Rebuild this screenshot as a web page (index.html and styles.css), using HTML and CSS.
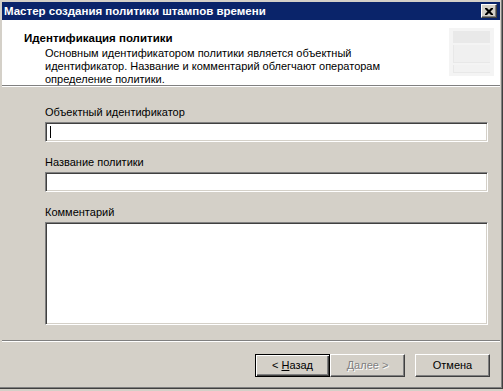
FILE: index.html
```html
<!DOCTYPE html>
<html lang="ru">
<head>
    <meta charset="UTF-8">
    <meta name="viewport" content="width=device-width, initial-scale=1.0">
    <title>Мастер создания политики штампов времени</title>
    <link rel="stylesheet" href="styles.css">
</head>
<body>
    <div class="window">
        <div class="titlebar">
            <span class="title">Мастер создания политики штампов времени</span>
            <div class="close-btn">
                <svg width="8" height="7" viewBox="0 0 8 7">
                    <path d="M0 0h2l2 2l2-2h2v1l-2.5 2.5l2.5 2.5v1h-2l-2-2l-2 2h-2v-1l2.5-2.5l-2.5-2.5z" fill="#000"/>
                </svg>
            </div>
        </div>

        <div class="header">
            <div class="header-text">
                <div class="header-title">Идентификация политики</div>
                <div class="header-desc">
                    Основным идентификатором политики является объектный<br>
                    идентификатор. Название и комментарий облегчают операторам<br>
                    определение политики.
                </div>
            </div>
            <div class="header-icon">
                <div class="icon-top"></div>
                <div class="icon-row"></div>
                <div class="icon-row small"></div>
            </div>
        </div>

        <div class="content">
            <div class="form-group">
                <label>Объектный идентификатор</label>
                <div class="field"><span class="caret"></span></div>
            </div>
            <div class="form-group">
                <label>Название политики</label>
                <div class="field"></div>
            </div>
            <div class="form-group">
                <label>Комментарий</label>
                <div class="field memo"></div>
            </div>
        </div>

        <div class="footer">
            <div class="btn default"><span class="btn-face">&lt; <u>Н</u>азад</span></div>
            <div class="btn disabled"><span class="btn-face"><u>Д</u>алее &gt;</span></div>
            <div class="btn cancel"><span class="btn-face">Отмена</span></div>
        </div>
    </div>
</body>
</html>
```

FILE: styles.css
```css
* {
    box-sizing: border-box;
    margin: 0;
    padding: 0;
}

body {
    font-family: "Liberation Sans", Arial, sans-serif;
    font-size: 11px;
    line-height: 13px;
    color: #000;
    background-color: #d4d0c8;
    width: 503px;
    height: 391px;
    overflow: hidden;
}

.window {
    width: 503px;
    padding: 2px 2px 2px 2px;
    background-color: #d4d0c8;
    border-right: 1px solid #404040;
    border-bottom: 1px solid #404040;
    box-shadow: inset -1px -1px 0 #808080;
    display: flex;
    flex-direction: column;
}

/* title bar */
.titlebar {
    height: 18px;
    background-color: #0a246a;
    display: flex;
    align-items: center;
    justify-content: space-between;
    padding: 0 3px 0 2px;
}

.title {
    color: #fff;
    font-weight: bold;
    font-size: 11.5px;
}

.close-btn {
    width: 16px;
    height: 14px;
    background-color: #d4d0c8;
    border-top: 1px solid #fff;
    border-left: 1px solid #fff;
    border-right: 1px solid #404040;
    border-bottom: 1px solid #404040;
    box-shadow: inset -1px -1px 0 #808080;
    display: flex;
    align-items: center;
    justify-content: center;
    padding-right: 1px;
}

/* header */
.header {
    height: 66px;
    background-color: #fff;
    border-bottom: 1px solid #808080;
    box-shadow: 0 1px 0 #fff;
    display: flex;
    justify-content: space-between;
    align-items: flex-start;
    padding: 12px 6px 0 22px;
    position: relative;
    z-index: 1;
}

.header-title {
    font-weight: bold;
    font-size: 11.5px;
    margin-bottom: 2px;
}

.header-desc {
    padding-left: 21px;
}

.header-icon {
    width: 45px;
    height: 48px;
    margin-top: -4px;
    background-color: #f4f4f4;
    padding: 3px 4px;
    display: flex;
    flex-direction: column;
    gap: 2px;
}

.icon-top {
    height: 12px;
    background-color: #e9e9e9;
}

.icon-row {
    height: 18px;
    border-left: 1px solid #e8e8e8;
    border-bottom: 1px solid #e8e8e8;
    background-color: #f0f0f0;
}

.icon-row.small {
    height: 8px;
    background-color: #f2f2f2;
}

/* content */
.content {
    height: 254px;
    padding: 20px 12px 0 43px;
}

.form-group {
    margin-bottom: 14px;
}

label {
    display: block;
    margin-bottom: 3px;
}

.field {
    height: 20px;
    background-color: #fff;
    border-top: 1px solid #808080;
    border-left: 1px solid #808080;
    border-right: 1px solid #fff;
    border-bottom: 1px solid #fff;
    box-shadow: inset 1px 1px 0 #404040, inset -1px -1px 0 #d4d0c8;
    padding: 3px 4px;
}

.field.memo {
    height: 103px;
}

.caret {
    display: block;
    width: 1px;
    height: 12px;
    background-color: #000;
}

/* footer */
.footer {
    height: 46px;
    border-top: 1px solid #808080;
    box-shadow: inset 0 1px 0 #fff;
    display: flex;
    justify-content: flex-end;
    align-items: flex-start;
    padding: 13px 10px 0 0;
}

.btn {
    width: 75px;
    height: 23px;
    background-color: #d4d0c8;
    border-top: 1px solid #fff;
    border-left: 1px solid #fff;
    border-right: 1px solid #404040;
    border-bottom: 1px solid #404040;
    box-shadow: inset -1px -1px 0 #808080;
    display: flex;
    align-items: center;
    justify-content: center;
}

.btn.default {
    border: 1px solid #000;
    box-shadow: inset 1px 1px 0 #fff, inset -1px -1px 0 #404040, inset -2px -2px 0 #808080;
}

.btn.disabled .btn-face {
    color: #808080;
    text-shadow: 1px 1px 0 #fff;
}

.btn.cancel {
    margin-left: 10px;
}

.btn-face u {
    text-decoration: underline;
}
```
